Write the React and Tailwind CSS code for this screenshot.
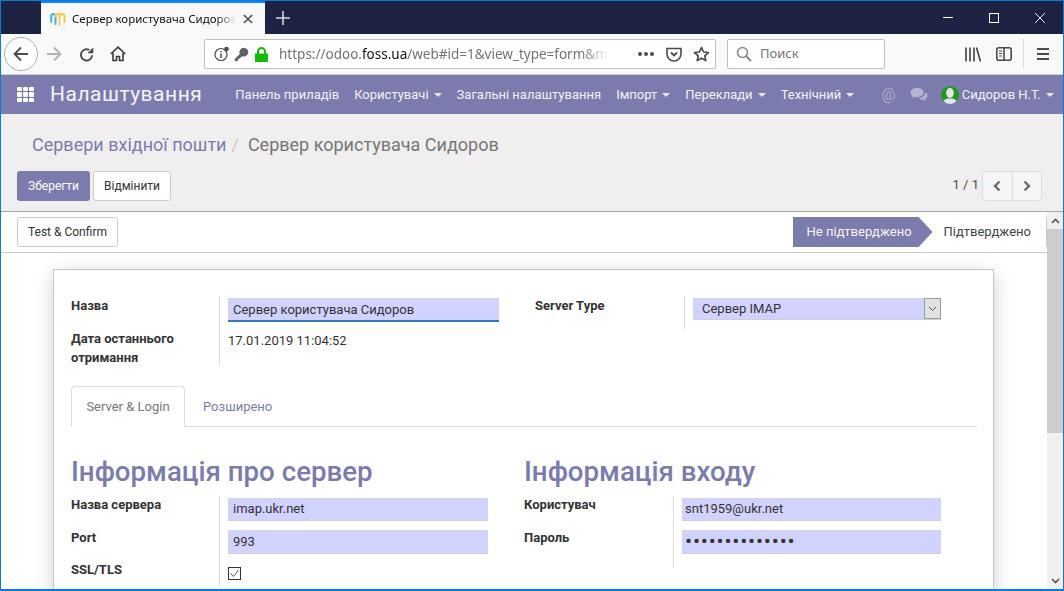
import React from "react";

const ui = { fontFamily: '"Noto Sans", "Open Sans", sans-serif' };

function Caret() {
  return <span className="ml-[5px] inline-block w-0 h-0 border-x-[4px] border-x-transparent border-t-[4px] border-t-[#e6e6f0] align-middle" />;
}

function NavItem({ children, caret, className = "" }) {
  return (
    <span className={"whitespace-nowrap text-[13px] text-[#f2f2f8] " + className}>
      {children}
      {caret && <Caret />}
    </span>
  );
}

function Field({ label, children, labelClass = "" }) {
  return (
    <div className="flex">
      <div className={"w-[149px] shrink-0 border-r border-[#dcdcdc] text-[13px] font-bold text-[#333] leading-[19px] " + labelClass}>{label}</div>
      <div className="flex-1 pl-[8px]">{children}</div>
    </div>
  );
}

function Input({ children, h = "h-[23px]", className = "" }) {
  return (
    <div className={"flex items-center bg-[#d2d2ff] border-b border-[#cfcfdc] pl-[5px] text-[13px] text-[#333] " + h + " " + className}>
      {children}
    </div>
  );
}

export default function App() {
  return (
    <div className="w-[1064px] h-[591px] overflow-hidden flex flex-col border border-[#0a7bd6] border-b-2 bg-white" style={{ fontFamily: 'Roboto, sans-serif' }}>
      {/* Title bar */}
      <div className="h-[33px] shrink-0 flex bg-[#1e2344] pl-[40px]" style={ui}>
        <div className="w-[224px] h-full bg-[#f9f9fa] border-t-2 border-[#0a84ff] flex items-center pl-[9px]">
          <svg width="16" height="17" viewBox="0 0 16 17" fill="none" strokeWidth="2" strokeLinecap="round">
            <path d="M1.2 12V6.5C1.2 3 5.5 3 5.5 6.5V14" stroke="#45aee8" />
            <path d="M5.5 6.5C5.5 3 9.5 3 9.5 6.5V15" stroke="#f7d24a" />
            <path d="M9.5 6.5C9.5 3 14.5 3 14.5 6.5V12" stroke="#f5c842" />
          </svg>
          <span className="ml-[6px] w-[164px] overflow-hidden whitespace-nowrap text-[11.5px] text-[#111]" style={{ maskImage: "linear-gradient(to right, black 88%, transparent)" }}>Сервер користувача Сидоров</span>
          <svg className="ml-[7px]" width="10" height="10" viewBox="0 0 11 11" stroke="#4a4a4f" strokeWidth="1.6"><path d="M1 1L10 10M10 1L1 10" /></svg>
        </div>
        <div className="w-[35px] flex items-center justify-center">
          <svg width="14" height="14" viewBox="0 0 14 14" stroke="#d6d6dc" strokeWidth="1.6"><path d="M7 0V14M0 7H14" /></svg>
        </div>
        <div className="flex-1" />
        <div className="flex items-center pr-[18px] gap-[36px]">
          <div className="w-[10px] h-px bg-white" />
          <div className="w-[10px] h-[10px] border border-white" />
          <svg width="10" height="10" viewBox="0 0 10 10" stroke="#fff" strokeWidth="0.9"><path d="M0 0L10 10M10 0L0 10" /></svg>
        </div>
      </div>

      {/* Toolbar */}
      <div className="h-[41px] shrink-0 flex items-center bg-[#f9f9fa] border-b border-[#cccccc]" style={ui}>
        <div className="ml-[3px] w-[34px] h-[34px] rounded-full border border-[#b1b1b3] bg-white flex items-center justify-center">
          <svg width="16" height="16" viewBox="0 0 16 16" fill="none" stroke="#4a4a4f" strokeWidth="1.8"><path d="M15 8H1.5M8 1.5L1.5 8L8 14.5" /></svg>
        </div>
        <svg className="ml-[8px]" width="16" height="16" viewBox="0 0 16 16" fill="none" stroke="#b1b1b3" strokeWidth="1.8"><path d="M1 8H14.5M8 1.5L14.5 8L8 14.5" /></svg>
        <svg className="ml-[17px]" width="15" height="15" viewBox="0 0 16 16" fill="none" stroke="#4a4a4f" strokeWidth="2"><path d="M14 9A6 6 0 1 1 11 3.2" /><path d="M15 1V6.5H9.5Z" fill="#4a4a4f" strokeWidth="0.5" /></svg>
        <svg className="ml-[16px]" width="16" height="16" viewBox="0 0 16 16" fill="none" stroke="#3a3a3f" strokeWidth="1.6"><path d="M0.8 8L8 1.2L15.2 8" /><path d="M3 7V14.5H6.5V10.5H9.5V14.5H13V7" /></svg>
        <div className="ml-[78px] w-[512px] h-[30px] bg-white border border-[#bfbfbf] rounded-[2px] flex items-center pl-[9px] relative">
          <svg width="16" height="16" viewBox="0 0 16 16" fill="none"><circle cx="7" cy="8.5" r="6" stroke="#4a4a4f" strokeWidth="1.2" /><path d="M7 7.5V12M7 5V6.3" stroke="#4a4a4f" strokeWidth="1.5" /><circle cx="12.5" cy="3" r="2.3" fill="#4a4a4f" /></svg>
          <svg className="ml-[4px]" width="15" height="15" viewBox="0 0 16 16" fill="#5f5f63"><path d="M10.5 0.8A4.7 4.7 0 0 0 6.2 7.4L0.8 12.8V15.2H3.4L4.4 14V12.6H5.8L8.6 9.8A4.7 4.7 0 1 0 10.5 0.8Z" /></svg>
          <svg className="ml-[6px]" width="13" height="15" viewBox="0 0 13 15" fill="#12bc00"><path d="M2 6.5V4.5A4.5 4.5 0 0 1 11 4.5V6.5H13V15H0V6.5ZM4 6.5H9V4.5A2.5 2.5 0 0 0 4 4.5Z" /></svg>
          <span className="ml-[11px] whitespace-nowrap text-[13.5px] text-[#737373]" style={{ maskImage: "linear-gradient(to right, black 92%, transparent)" }}>
            https://odoo.<span className="text-[#111]">foss.ua</span>/web#id=1&amp;view_type=form&amp;m
          </span>
          <div className="flex-1" />
          <div className="flex gap-[2px] mr-[12px]">
            <span className="w-[4px] h-[4px] rounded-full bg-[#4a4a4f]" /><span className="w-[4px] h-[4px] rounded-full bg-[#4a4a4f]" /><span className="w-[4px] h-[4px] rounded-full bg-[#4a4a4f]" />
          </div>
          <svg className="mr-[11px]" width="16" height="15" viewBox="0 0 16 15" fill="none" stroke="#4a4a4f" strokeWidth="1.6"><path d="M1 1.5H15V7A7 7 0 0 1 1 7Z" /><path d="M5 5.5L8 8.5L11 5.5" strokeWidth="1.8" /></svg>
          <svg className="mr-[5px]" width="17" height="16" viewBox="0 0 17 16" fill="none" stroke="#4a4a4f" strokeWidth="1.7" strokeLinejoin="round"><path d="M8.5 1.5L10.6 6L15.5 6.5L11.8 9.8L12.8 14.6L8.5 12.2L4.2 14.6L5.2 9.8L1.5 6.5L6.4 6Z" /></svg>
        </div>
        <div className="ml-[11px] w-[158px] h-[30px] bg-white border border-[#bfbfbf] rounded-[2px] flex items-center pl-[8px]">
          <svg width="16" height="16" viewBox="0 0 16 16" fill="none" stroke="#8a8a8a" strokeWidth="1.6"><circle cx="6.5" cy="6.5" r="5" /><path d="M10 10L15 15" strokeWidth="2" /></svg>
          <span className="ml-[8px] text-[13px] text-[#737373]">Поиск</span>
        </div>
        <svg className="ml-[80px]" width="16" height="15" viewBox="0 0 16 15" fill="none" stroke="#4a4a4f" strokeWidth="1.7"><path d="M1 0.5V14.5M5 0.5V14.5M9 0.5V14.5M11.5 0.5L15.5 14.5" /></svg>
        <svg className="ml-[15px]" width="16" height="14" viewBox="0 0 16 14" fill="none" stroke="#4a4a4f" strokeWidth="1.6"><rect x="0.8" y="0.8" width="14.4" height="12.4" rx="2" /><path d="M8 1V13" /><path d="M3 4H6M3 6.5H6M3 9H6" strokeWidth="1" /></svg>
        <div className="ml-[11px] w-px h-[30px] bg-[#dcdcdc]" />
        <div className="ml-[13px] w-[12px] flex flex-col gap-[3px]">
          <span className="h-[2px] bg-[#4a4a4f]" /><span className="h-[2px] bg-[#4a4a4f]" /><span className="h-[2px] bg-[#4a4a4f]" />
        </div>
      </div>

      {/* Odoo navbar */}
      <div className="h-[39px] shrink-0 flex items-center bg-[#7c7bad] pl-[16px]">
        <div className="w-[17px] h-[15px] grid grid-cols-3 gap-[1px] shrink-0">
          {Array.from({ length: 9 }).map((_, i) => <span key={i} className="bg-white rounded-[1px]" />)}
        </div>
        <span className="ml-[16px] text-[21px] text-[#f4f4fa] tracking-[0.5px]">Налаштування</span>
        <div className="ml-[33px] flex items-center gap-[15px]">
          <NavItem>Панель приладів</NavItem>
          <NavItem caret>Користувачі</NavItem>
          <NavItem>Загальні налаштування</NavItem>
          <NavItem caret>Імпорт</NavItem>
          <NavItem caret>Переклади</NavItem>
          <NavItem caret>Технічний</NavItem>
        </div>
        <span className="ml-[27px] text-[16px] text-[#a9a8cb]">@</span>
        <svg className="ml-[14px]" width="18" height="15" viewBox="0 0 18 15" fill="#b4b3d2"><path d="M7 1C3.2 1 0.5 3 0.5 5.5C0.5 7 1.4 8.3 3 9.1L2 11.5L5.3 9.8C5.8 9.9 6.4 10 7 10C10.8 10 13.5 8 13.5 5.5S10.8 1 7 1Z" /><path d="M15 5.5C15 8.5 12.3 11 8.5 11.4C9.7 12.2 11 12.5 12.3 12.4L15.5 14L15 11.7C16.6 11 17.5 9.8 17.5 8.5C17.5 7.3 16.5 6.2 15 5.5Z" /></svg>
        <svg className="ml-[13px]" width="18" height="18" viewBox="0 0 18 18"><circle cx="9" cy="9" r="9" fill="#1f9a1c" /><ellipse cx="9" cy="7" rx="3.8" ry="5" fill="#e4e4ea" /><path d="M2.5 15C4 13 6 12.5 9 12.5S14 13 15.5 15C14 17 11.5 18 9 18S4 17 2.5 15Z" fill="#e4e4ea" /></svg>
        <NavItem caret className="ml-[3px]">Сидоров Н.Т.</NavItem>
      </div>

      {/* Control panel */}
      <div className="h-[98px] shrink-0 bg-[#f0eeee] border-b border-[#a8a8a8] pl-[16px] pr-[21px]">
        <div className="pt-[19px] pl-[15px] text-[18px] leading-[24px] text-[#777]">
          <span className="text-[#7c7bad]">Сервери вхідної пошти</span>
          <span className="text-[#ccc] pl-[5px] pr-[9px]">/</span>
          <span>Сервер користувача Сидоров</span>
        </div>
        <div className="mt-[14px] flex items-center">
          <div className="w-[73px] h-[30px] rounded-[3px] bg-[#7c7bad] flex items-center justify-center text-[12px] text-white">Зберегти</div>
          <div className="ml-[3px] w-[78px] h-[30px] rounded-[3px] bg-white border border-[#cccccc] flex items-center justify-center text-[12px] text-[#333]">Відмінити</div>
          <div className="flex-1" />
          <span className="text-[13px] text-[#4c4c4c] mr-[3px] -translate-y-px">1 / 1</span>
          <div className="w-[60px] h-[30px] rounded-[3px] border border-[#dcdcdc] bg-[#f6f5f5] flex">
            <div className="flex-1 border-r border-[#dcdcdc] flex items-center justify-center">
              <svg width="8" height="12" viewBox="0 0 8 12" fill="none" stroke="#6b6b6b" strokeWidth="2.4"><path d="M6.5 1.5L2 6L6.5 10.5" /></svg>
            </div>
            <div className="flex-1 flex items-center justify-center">
              <svg width="8" height="12" viewBox="0 0 8 12" fill="none" stroke="#6b6b6b" strokeWidth="2.4"><path d="M1.5 1.5L6 6L1.5 10.5" /></svg>
            </div>
          </div>
        </div>
      </div>

      {/* Form + scrollbar */}
      <div className="flex-1 min-h-0 flex overflow-hidden">
        <div className="flex-1 min-w-0 flex flex-col">
          <div className="h-[41px] shrink-0 border-b border-[#cccccc] flex items-center pl-[16px]">
            <div className="w-[101px] h-[30px] rounded-[3px] bg-white border border-[#cccccc] flex items-center justify-center text-[12px] text-[#333]">Test &amp; Confirm</div>
            <div className="flex-1" />
            <div className="h-[30px] flex items-center text-[13px]">
              <div className="h-full w-[140px] bg-[#7c7bad] text-[#f4f4fa] flex items-center pl-[14px]" style={{ clipPath: "polygon(0 0, 90% 0, 100% 50%, 90% 100%, 0 100%)" }}>Не підтверджено</div>
              <div className="pl-[11px] pr-[15px] text-[#444]">Підтверджено</div>
            </div>
            <div className="w-px h-[30px] bg-[#cccccc]" />
          </div>
          <div className="flex-1 min-h-0 px-[52px] pt-[16px] overflow-hidden">
            <div className="w-[941px] h-[500px] border border-[#c8c6cf] bg-white shadow-[0_5px_20px_-1px_rgba(0,0,0,0.2)] pl-[17px] pr-[16px] pt-[26px]">
              {/* Top group */}
              <div className="flex">
                <div className="w-[448px] shrink-0 flex flex-col">
                  <Field label="Назва" labelClass="h-[33px]">
                    <div className="pt-[2px] w-[271px]">
                      <Input h="h-[24px]" className="border-b-2 border-b-[#337ab7] pt-px">Сервер користувача Сидоров</Input>
                    </div>
                  </Field>
                  <Field label={<>Дата останнього<br />отримання</>} labelClass="h-[37px]">
                    <div className="text-[13px] text-[#333] leading-[18px] pt-[3px]">17.01.2019 11:04:52</div>
                  </Field>
                </div>
                <div className="ml-[16px] flex-1 flex">
                  <div className="w-[150px] h-[33px] shrink-0 border-r border-[#dcdcdc] text-[13px] font-bold text-[#333] leading-[19px]">Server Type</div>
                  <div className="pl-[8px] pt-[2px]">
                    <div className="w-[248px] h-[22px] bg-[#d2d2ff] border-b border-[#cfcfdc] flex items-center pl-[9px] text-[13px] text-[#333]">
                      <span className="flex-1">Сервер IMAP</span>
                      <div className="w-[17px] h-[21px] bg-[#e1e1e1] border border-[#9c9c9c] flex items-center justify-center">
                        <svg width="9" height="6" viewBox="0 0 9 6" fill="none" stroke="#555" strokeWidth="1"><path d="M1 1L4.5 4.5L8 1" /></svg>
                      </div>
                    </div>
                  </div>
                </div>
              </div>

              {/* Tabs */}
              <div className="mt-[20px] h-[41px] border-b border-[#dddddd] flex text-[13px]">
                <div className="w-[114px] h-[41px] bg-white border border-[#dddddd] border-b-white rounded-t-[4px] flex items-center justify-center text-[#777]">Server &amp; Login</div>
                <div className="ml-[18px] h-[41px] flex items-center text-[#7c7bad]">Розширено</div>
              </div>

              {/* Groups */}
              <div className="mt-[30px] flex">
                <div className="w-[453px] shrink-0">
                  <div className="text-[27.7px] font-medium leading-[30px] text-[#7c7bad]">Інформація про сервер</div>
                  <div className="mt-[9px] flex flex-col">
                    <Field label="Назва сервера" labelClass="h-[32px] !leading-[17px]">
                      <div className="w-[260px] pt-[2px]"><Input>imap.ukr.net</Input></div>
                    </Field>
                    <Field label="Port" labelClass="h-[32px]">
                      <div className="w-[260px] pt-[2px]"><Input h="h-[24px]">993</Input></div>
                    </Field>
                    <Field label="SSL/TLS" labelClass="h-[26px]">
                      <div className="pt-[7px]">
                        <div className="w-[13px] h-[13px] border border-[#333] flex items-center justify-center bg-white">
                          <svg width="11" height="11" viewBox="0 0 11 11" fill="none" stroke="#555" strokeWidth="1"><path d="M1.5 5.5L4.5 8.5L9.5 2" /></svg>
                        </div>
                      </div>
                    </Field>
                  </div>
                </div>
                <div className="flex-1">
                  <div className="text-[27.7px] font-medium leading-[30px] text-[#7c7bad]">Інформація входу</div>
                  <div className="mt-[9px] flex flex-col">
                    <Field label="Користувач" labelClass="h-[32px] !w-[150px] !leading-[17px]">
                      <div className="w-[259px] pt-[2px]"><Input h="h-[23px]" className="!pl-[3px]">snt1959@ukr.net</Input></div>
                    </Field>
                    <Field label="Пароль" labelClass="h-[40px] !w-[150px]">
                      <div className="w-[259px] pt-[2px]"><Input h="h-[24px]" className="!pl-[3px] !text-[21px] leading-none tracking-[0.8px] text-[#222]">••••••••••••••</Input></div>
                    </Field>
                  </div>
                </div>
              </div>
            </div>
          </div>
        </div>
        <div className="w-[16px] shrink-0 bg-[#f0f0f0] flex flex-col">
          <div className="h-[17px] flex items-center justify-center">
            <svg width="9" height="6" viewBox="0 0 9 6" fill="none" stroke="#555" strokeWidth="1.6"><path d="M1 5L4.5 1.5L8 5" /></svg>
          </div>
          <div className="h-[204px] bg-[#cdcdcd]" />
          <div className="flex-1" />
          <div className="h-[17px] flex items-center justify-center">
            <svg width="9" height="6" viewBox="0 0 9 6" fill="none" stroke="#555" strokeWidth="1.6"><path d="M1 1L4.5 4.5L8 1" /></svg>
          </div>
        </div>
      </div>
    </div>
  );
}
